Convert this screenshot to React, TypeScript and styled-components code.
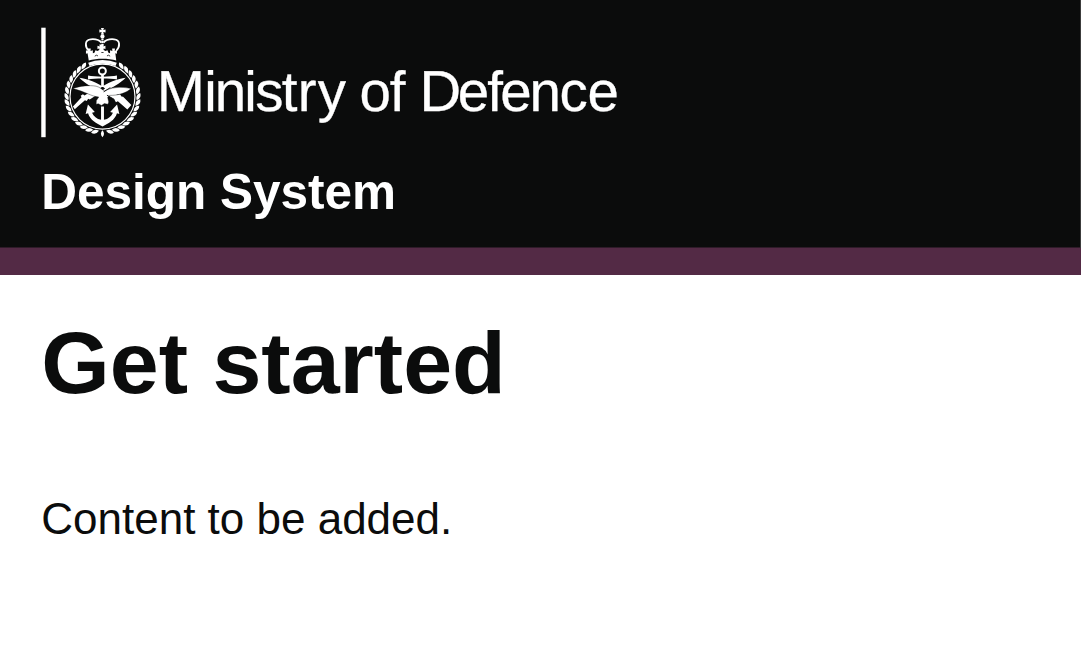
import React from "react";
import styled, { createGlobalStyle } from "styled-components";

const GlobalStyle = createGlobalStyle`
  body {
    margin: 0;
    background: #ffffff;
    color: #0b0c0c;
    font-family: "Liberation Sans", Arial, sans-serif;
    overflow: hidden;
  }
`;

const Header = styled.header`
  box-sizing: border-box;
  height: 275px;
  padding: 26px 41.25px 0;
  background: #0b0c0c;
  border-bottom: 27px solid #532a45;
  box-shadow: inset -1px 0 #3c3d3d, inset 0 -1px #2f1b29;
  color: #ffffff;
`;

const Logo = styled.svg`
  display: block;
  width: 580px;
  height: 112px;
`;

const ServiceName = styled.div`
  margin-top: 26px;
  font-size: 49.5px;
  line-height: 56px;
  font-weight: 700;
`;

const Main = styled.main`
  padding: 40px 41.25px;
`;

const Title = styled.h1`
  margin: 0 0 83px;
  font-size: 88px;
  line-height: 96px;
  font-weight: 700;
`;

const Body = styled.p`
  margin: 0;
  font-size: 44px;
  line-height: 50px;
`;

const CX = 102.75;
const CY = 96.6;
const LEAF = "M0-4.1Q3.8 -.4 0 4.1Q-3.8 -.4 0-4.1Z";
const leafAngles = Array.from({ length: 15 }, (_, i) => 31.5 + i * 9.75);

function Wreath() {
  return (
    <g>
      {leafAngles.map((a) => (
        <React.Fragment key={a}>
          <path
            transform={`rotate(${a} ${CX} ${CY}) translate(${CX} ${CY - 35.9}) rotate(-64)`}
            d={LEAF}
          />
          <path
            transform={`rotate(${-a} ${CX} ${CY}) translate(${CX} ${CY - 35.9}) rotate(64)`}
            d={LEAF}
          />
        </React.Fragment>
      ))}
      <path d="M102.7 130.2Q105.8 133.6 102.7 137.3Q99.6 133.6 102.7 130.2Z" />
    </g>
  );
}

function Crown() {
  return (
    <g>
      <path d="M101.2 28h3l-.7 2.1 2.3-.6v3l-2.3-.6.7 2.5h-3l.7-2.5-2.3.6v-3l2.3.6Z" />
      <circle cx="102.7" cy="36.4" r="2.1" />
      <path
        d="M89 51C84.9 46.5 84.8 39.8 91.1 39.3C96 38.9 98.9 39.2 101.6 42.6M116.4 51C120.6 46.5 120.7 39.8 114.3 39.3C109.4 38.9 106.5 39.2 103.8 42.6"
        fill="none"
        stroke="#fff"
        strokeWidth="1.8"
      />
      <path
        d="M102.7 38.5V48"
        fill="none"
        stroke="#fff"
        strokeWidth="2.2"
        strokeDasharray="2 .6"
      />
      <path d="M86.2 50.3l2.2.8-.2-2.6h2.8l-.2 2.6 2.3-.8v3l1.6-.5 1-2.6 2 .8 1.8-.9.1-1.5-1.9.4v-3.2l2.4.6-.6-1.9h4.4l-.6 1.9 2.4-.6V49l-1.9-.4.1 1.5 1.8.9 2-.8 1 2.6 1.6.5v-3l2.3.8-.2-2.6h2.8l-.2 2.6 2.2-.8v3.4l-1.6-.5L116.5 60.6C108.5 58.2 97 58.2 89 60.6L87.8 53.2l-1.6.5Z" />
      <path
        d="M95 56.2l1.6-1 1.6.7M107.2 55.9l1.6-.7 1.6 1M101.6 52.5h2.2"
        fill="none"
        stroke="#0b0c0c"
        strokeWidth=".8"
      />
      <path
        d="M89.1 64.3C97 61.1 108.4 61.1 116.4 64.3"
        fill="none"
        stroke="#fff"
        strokeWidth="3.6"
      />
    </g>
  );
}

function Badge() {
  return (
    <g>
      <circle cx={CX} cy={CY} r="32.5" fill="none" stroke="#fff" strokeWidth="1.2" />
      <circle cx="102.6" cy="71" r="3.5" fill="none" stroke="#fff" strokeWidth="2" />
      <path d="M88.3 75.6C95 77 110.5 77 117.2 75.6V79.6C110.5 78.2 95 78.2 88.3 79.6Z" />
      <path d="M101.4 74h2.7v13h-2.7Z" />
      <path d="M79.6 77.8C87 78.5 98.5 82.7 105.3 88.4L101.7 91.2C93 88.5 84.5 82.8 79.6 77.8ZM125.9 77.8C118.5 78.5 107 82.7 100.2 88.4L103.8 91.2C112.5 88.5 121 82.8 125.9 77.8Z" />
      <path d="M73.2 106.6L81.8 97.3L80.9 95.7L83.2 94.3L84.7 95.6L91.5 91.5L97.3 94.8L90 99.5L88.5 98.8L86.9 101.1L85.2 100.2L78.6 105.9L75 109.2Z" />
      <path d="M131.6 105L123.4 96.8L121.7 96.6L120.3 94.2L117.6 95L110 90.2L105.4 93.8L114.6 99.6L116.2 102.2L118.1 101.2L127.6 109.4Z" />
      <path
        d="M73.2 88.6C80.2 85.7 90.2 85 96.3 86.2C99.5 86.9 102 88.9 104.6 91.3C110 87.6 121 86.1 131.4 88.6C126.2 93 119 95.5 109.5 95.4L107.9 97.4L109 102L108.2 104.3L104.6 103.6L101.8 105.4L98.6 103.8L96.4 104.2L96.6 100.6L99 97C92.4 96.8 85.4 91.6 73.2 88.6Z"
        stroke="#0b0c0c"
        strokeWidth=".4"
      />
      <path
        d="M103.9 91.8L110.6 87.6M107.2 95.2L114.6 99.4"
        stroke="#0b0c0c"
        strokeWidth=".9"
      />
      <path d="M101.3 106.4h2.9v13.4C108.5 119 111.7 116.2 113.2 112.7L110.4 112.1L117.3 104.6L119.6 114.1L117.2 113.3C115.1 120.3 108.8 123.2 102.8 126.6C96.7 123.2 90.4 120.3 88.3 113.3L85.9 114.1L88.2 104.6L95.1 112.1L92.3 112.7C93.8 116.2 97 119 101.3 119.8Z" />
    </g>
  );
}

const glyphX = [
  157, 204.4, 214.9, 244.6, 255.5, 281.9, 298, 317.9, 344, 359.8, 390.1, 405,
  419.8, 458, 487.5, 500.6, 529.7, 559.7, 587.7,
].join(" ");

export default function App() {
  return (
    <>
      <GlobalStyle />
      <Header>
        <Logo viewBox="41.25 26 580 112" fill="#fff" aria-label="Ministry of Defence">
          <path d="M41.5 27.7h4.4v109.5h-4.4Z" />
          <Wreath />
          <Crown />
          <Badge />
          <text
            x={glyphX}
            y="110.7"
            fontSize="56.5"
            fontFamily="Liberation Sans, Arial, sans-serif"
            stroke="#fff"
            strokeWidth=".3"
            textRendering="geometricPrecision"
          >
            <tspan fontSize="57.8">M</tspan>inistry of <tspan fontSize="57.8">D</tspan>efence
          </text>
        </Logo>
        <ServiceName>Design System</ServiceName>
      </Header>
      <Main>
        <Title>Get started</Title>
        <Body>Content to be added.</Body>
      </Main>
    </>
  );
}
